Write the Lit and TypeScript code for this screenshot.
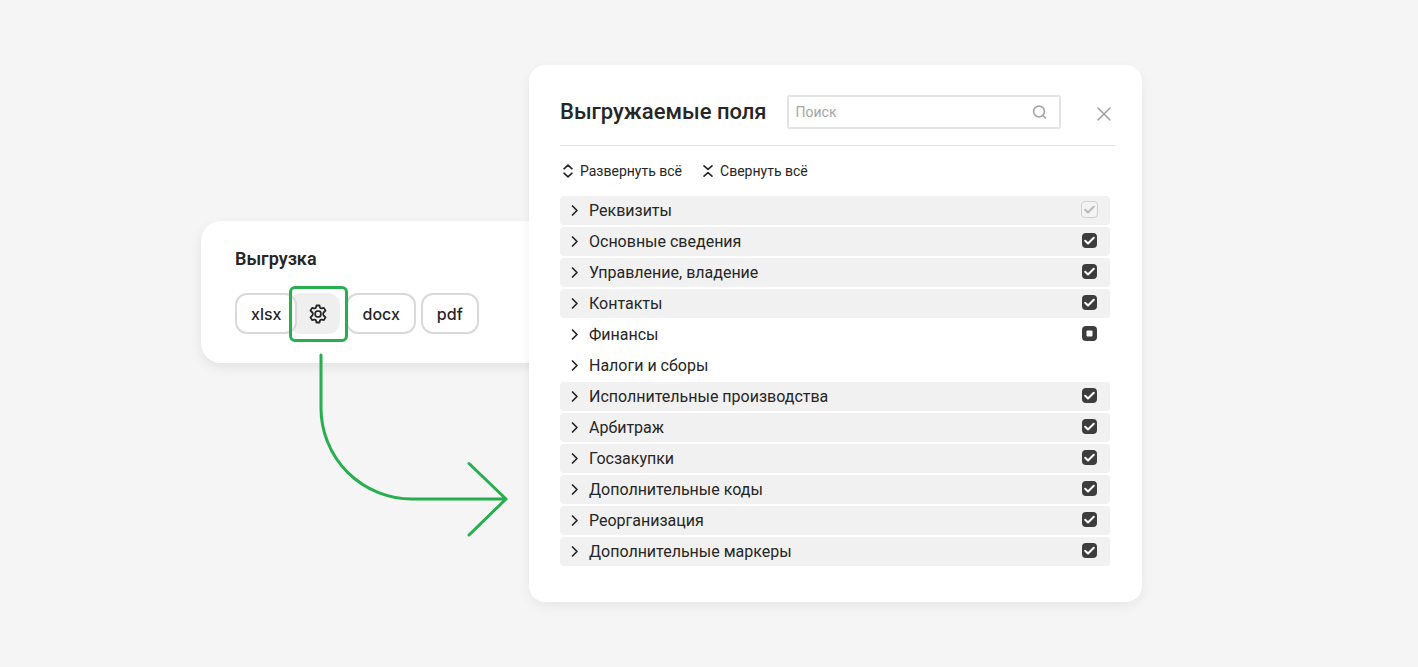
import { LitElement, html, css, svg, nothing } from "lit";
import { customElement, property } from "lit/decorators.js";

type Mark = "on" | "mixed" | "locked" | "off";

interface Section {
  id: string;
  title: string;
  mark: Mark;
}

const SECTIONS: Section[] = [
  { id: "details", title: "Реквизиты", mark: "locked" },
  { id: "basics", title: "Основные сведения", mark: "on" },
  { id: "management", title: "Управление, владение", mark: "on" },
  { id: "contacts", title: "Контакты", mark: "on" },
  { id: "finance", title: "Финансы", mark: "mixed" },
  { id: "taxes", title: "Налоги и сборы", mark: "off" },
  { id: "enforcement", title: "Исполнительные производства", mark: "on" },
  { id: "arbitration", title: "Арбитраж", mark: "on" },
  { id: "purchases", title: "Госзакупки", mark: "on" },
  { id: "codes", title: "Дополнительные коды", mark: "on" },
  { id: "reorganization", title: "Реорганизация", mark: "on" },
  { id: "markers", title: "Дополнительные маркеры", mark: "on" },
];

const base = css`
  * {
    box-sizing: border-box;
  }
  button,
  input {
    font: inherit;
    color: inherit;
    margin: 0;
  }
  button {
    border: 0;
    padding: 0;
    background: none;
    cursor: pointer;
  }
  svg {
    display: block;
    flex: none;
    fill: none;
    stroke: currentColor;
    stroke-linecap: round;
    stroke-linejoin: round;
  }
  h2 {
    margin: 0;
  }
`;

@customElement("export-card")
export class ExportCard extends LitElement {
  static styles = [
    base,
    css`
      :host {
        display: block;
        padding: 26px 34px 29px;
        border-radius: 20px;
        background: #fff;
        box-shadow: 0 4px 12px rgba(0, 0, 0, 0.08);
      }
      .title {
        font-size: 18px;
        line-height: 24px;
        font-weight: 600;
      }
      .formats {
        display: flex;
        margin-top: 22px;
      }
      .format {
        height: 41px;
        padding: 0 14px;
        border: 2px solid #d9d9d9;
        border-radius: 12px;
        background: #fff;
        font-family: Inter, "Liberation Sans", sans-serif;
        font-size: 16px;
        line-height: 24px;
        font-weight: 500;
      }
      .format + .format {
        margin-left: 5px;
      }
      .settings {
        position: relative;
        display: flex;
        align-items: center;
        justify-content: center;
        width: 51px;
        height: 41px;
        margin: 0 6px 0 -8px;
        padding-left: 7px;
        border-radius: 12px;
        background: #efefef;
      }
      .front {
        position: relative;
        z-index: 1;
      }
      .frame {
        position: absolute;
        inset: -7px -8px -8px 0;
        border: 3px solid #27ae4f;
        border-radius: 6px;
        z-index: 2;
      }
    `,
  ];

  render() {
    return html`
      <h2 class="title">Выгрузка</h2>
      <div class="formats">
        <button class="format front" type="button">xlsx</button>
        <button class="settings" type="button" aria-label="Настройка полей">
          <svg width="20" height="20" viewBox="0 0 20 20" stroke-width="1.8">
            <path
              d="M8.500 1.500h3l.500 2q.600 1.200 1.900.900l2-.500 1.600 2.700-1.400 1.400q-1 1-1 2t1 2l1.400 1.400-1.600 2.700-2-.500q-1.300-.300-1.900.900l-.500 2h-3l-.500-2q-.600-1.200-1.900-.900l-2 .500-1.600-2.700 1.400-1.400q1-1 1-2t-1-2L2.500 6.600l1.600-2.700 2 .500q1.300.300 1.900-.900Z"
            />
            <rect x="7.200" y="7.200" width="5.600" height="5.600" rx="2" />
          </svg>
          <span class="frame"></span>
        </button>
        <button class="format" type="button">docx</button>
        <button class="format" type="button">pdf</button>
      </div>
    `;
  }
}

@customElement("section-row")
export class SectionRow extends LitElement {
  @property({ attribute: false }) section!: Section;

  static styles = [
    base,
    css`
      :host {
        display: block;
      }
      .row {
        display: flex;
        align-items: center;
        height: 29px;
        padding: 0 12px 0 8px;
        border-radius: 4px;
      }
      .filled {
        background: #f1f1f1;
      }
      .expand {
        display: flex;
        flex: 1;
        align-items: center;
        gap: 8px;
        font-size: 16px;
        line-height: 24px;
        text-align: left;
      }
      .check {
        display: grid;
        width: 17px;
        height: 17px;
        margin-bottom: 2px;
        place-items: center;
      }
      .check > * {
        grid-area: 1 / 1;
      }
      .box {
        appearance: none;
        width: 15px;
        height: 15px;
        border-radius: 4px;
        background: #3d3d3d;
      }
      .box:disabled {
        width: 17px;
        height: 17px;
        border: 1px solid #cfcfcf;
        background: #f3f3f3;
      }
      .glyph {
        color: #fff;
        pointer-events: none;
      }
      .box:disabled + .glyph {
        color: #b8b8b8;
      }
    `,
  ];

  render() {
    const { id, title, mark } = this.section;
    const filled = mark === "on" || mark === "locked";
    return html`
      <div class="row ${filled ? "filled" : ""}">
        <button class="expand" type="button" id=${id} aria-expanded="false">
          <svg width="13" height="13" viewBox="0 0 13 13" stroke-width="1.700">
            <path d="M4.500 2 9 6.500 4.500 11" />
          </svg>
          <span>${title}</span>
        </button>
        ${mark === "off"
          ? nothing
          : html`<span class="check">
              <input
                class="box"
                type="checkbox"
                aria-labelledby=${id}
                .checked=${filled}
                .indeterminate=${mark === "mixed"}
                ?disabled=${mark === "locked"}
              />
              <svg class="glyph" width="15" height="15" viewBox="0 0 15 15" stroke-width="2">
                ${mark === "mixed"
                  ? svg`<rect x="4.500" y="4.500" width="6" height="6" rx="1" fill="currentColor" stroke="none" />`
                  : svg`<path d="m3.200 7.800 2.800 2.700 5.800-5.800" />`}
              </svg>
            </span>`}
      </div>
    `;
  }
}

@customElement("fields-dialog")
export class FieldsDialog extends LitElement {
  static styles = [
    base,
    css`
      :host {
        display: block;
        padding: 30px 27px 36px 31px;
        border-radius: 16px;
        background: #fff;
        box-shadow: 0 4px 12px rgba(0, 0, 0, 0.06);
      }
      .head {
        display: flex;
        align-items: center;
        padding-bottom: 16px;
        border-bottom: 1px solid #e4e4e4;
      }
      .title {
        flex: none;
        font-size: 22px;
        line-height: 32px;
        font-weight: 500;
      }
      .search {
        display: flex;
        flex: 1;
        align-items: center;
        min-width: 0;
        height: 34px;
        margin: 0 35px 0 20px;
        padding: 0 12px 0 7px;
        border: 2px solid #e3e3e3;
        border-radius: 2px;
        color: #a6a6a6;
      }
      .query {
        flex: 1;
        min-width: 0;
        padding: 0;
        border: 0;
        outline: 0;
        background: none;
        font-size: 14px;
        line-height: 20px;
      }
      .query::placeholder {
        color: #a6a6a6;
        opacity: 1;
      }
      .close {
        margin: 4px 3px 0 0;
        color: #a0a0a0;
      }
      .tools {
        display: flex;
        gap: 18px;
        padding: 15px 0;
      }
      .tool {
        display: flex;
        align-items: center;
        gap: 5px;
        padding-left: 1px;
        font-size: 14px;
        line-height: 20px;
      }
      .list {
        display: grid;
        gap: 2px;
        margin-right: 5px;
      }
    `,
  ];

  render() {
    return html`
      <div class="head">
        <h2 class="title">Выгружаемые поля</h2>
        <label class="search">
          <input class="query" type="text" placeholder="Поиск" aria-label="Поиск" />
          <svg width="15" height="15" viewBox="0 0 15 15" stroke-width="1.600">
            <circle cx="7" cy="6.500" r="5.400" />
            <path d="m11 10.500 2.500 2.500" />
          </svg>
        </label>
        <button class="close" type="button" aria-label="Закрыть">
          <svg width="16" height="16" viewBox="0 0 16 16" stroke-width="1.500">
            <path d="m2 2 12 12M14 2 2 14" />
          </svg>
        </button>
      </div>
      <div class="tools">
        <button class="tool" type="button">
          <svg width="14" height="14" viewBox="0 0 14 14" stroke-width="1.600">
            <path d="M3 4.800 7 1.200l4 3.600M3 9.200l4 3.600 4-3.600" />
          </svg>
          Развернуть всё
        </button>
        <button class="tool" type="button">
          <svg width="14" height="14" viewBox="0 0 14 14" stroke-width="1.600">
            <path d="m3 1.800 4 3.600 4-3.600M3 12.200l4-3.600 4 3.600" />
          </svg>
          Свернуть всё
        </button>
      </div>
      <div class="list">
        ${SECTIONS.map((s) => html`<section-row .section=${s}></section-row>`)}
      </div>
    `;
  }
}

@customElement("app-root")
export class AppRoot extends LitElement {
  static styles = css`
    :host {
      display: block;
      min-height: 100vh;
      background: #f5f5f5;
      color: #262626;
      font-family: Roboto, "Liberation Sans", sans-serif;
    }
    .stage {
      display: grid;
      grid-template-columns: 328px minmax(0, 1fr);
      align-items: start;
      padding: 65px 276px 65px 201px;
    }
    .source {
      position: relative;
      margin: 156px -40px 0 0;
    }
    .dialog {
      position: relative;
      z-index: 1;
    }
    .arrow {
      position: absolute;
      top: 132px;
      left: 117px;
      fill: none;
      stroke: #27ae4f;
      stroke-width: 3;
      stroke-linecap: round;
      stroke-linejoin: round;
      pointer-events: none;
    }
  `;

  render() {
    return html`
      <main class="stage">
        <div class="source">
          <export-card></export-card>
          <svg class="arrow" width="192" height="186" viewBox="0 0 192 186">
            <path d="M3 2v53a91 91 0 0 0 91 91h94M151 110.500l37 35.500-37 36" />
          </svg>
        </div>
        <fields-dialog class="dialog"></fields-dialog>
      </main>
    `;
  }
}
